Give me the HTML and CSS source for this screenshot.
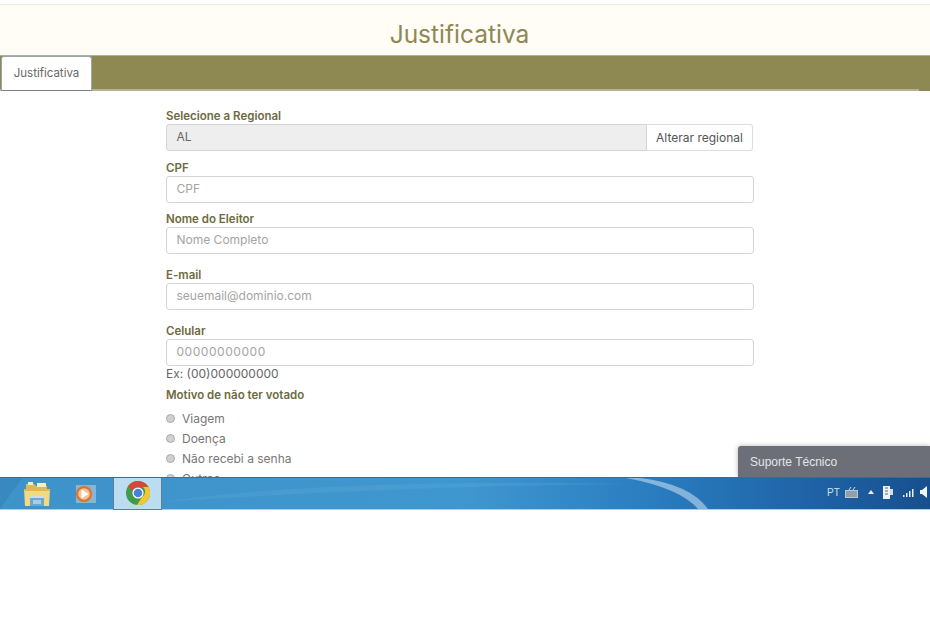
FILE: index.html
```html
<!DOCTYPE html>
<html lang="pt">
<head>
  <meta charset="UTF-8">
  <title>Justificativa</title>
  <link rel="stylesheet" href="styles.css">
</head>
<body>
  <div class="page">
    <header class="top">
      <h1>Justificativa</h1>
    </header>
    <nav class="tabs">
      <a class="tab">Justificativa</a>
    </nav>
    <form class="form">
      <label class="lbl lbl-first">Selecione a Regional</label>
      <div class="group">
        <div class="field readonly">AL</div>
        <button type="button" class="addon">Alterar regional</button>
      </div>

      <label class="lbl lbl-cpf">CPF</label>
      <div class="field">CPF</div>

      <label class="lbl lbl-nome">Nome do Eleitor</label>
      <div class="field">Nome Completo</div>

      <label class="lbl lbl-wide">E-mail</label>
      <div class="field">seuemail@dominio.com</div>

      <label class="lbl lbl-wide">Celular</label>
      <div class="field field-digits">00000000000</div>
      <div class="hint">Ex: (00)000000000</div>

      <label class="lbl lbl-motivo">Motivo de não ter votado</label>
      <div class="radios">
        <div class="radio"><span class="dot"></span>Viagem</div>
        <div class="radio"><span class="dot"></span>Doença</div>
        <div class="radio"><span class="dot"></span>Não recebi a senha</div>
        <div class="radio"><span class="dot"></span>Outros</div>
      </div>
    </form>
    <div class="support">Suporte Técnico</div>
  </div>

  <footer class="taskbar">
    <svg class="streak" width="930" height="31" viewBox="0 0 930 31">
      <path d="M0 31L22 0H0z" fill="#2f7fb6" opacity="0.5"/>
      <path d="M160 24Q330 0 640 6Q400 8 160 24z" fill="#7fc0e6" opacity="0.15"/>
      <path d="M640 0Q690 6 708 31H698Q680 10 626 0z" fill="#cfe3f2" opacity="0.55"/>
    </svg>
    <div class="tb-app tb-folder">
      <svg width="28" height="26" viewBox="0 0 28 26">
        <path d="M3 3h8l2 2h11v8H3z" fill="#d9b95c"/>
        <path d="M5 1h5v3H5zM14 2h9v4h-9z" fill="#f7eebf"/>
        <path d="M1 8h26l-1 17H2z" fill="#f3d983"/>
        <path d="M1 8h26v2H1z" fill="#e2b94d"/>
        <rect x="7" y="15" width="14" height="10" fill="#6fa8cf"/>
        <rect x="7" y="15" width="14" height="2" fill="#c7e0ef"/>
        <rect x="10" y="19" width="8" height="4" fill="#a9cde3"/>
      </svg>
    </div>
    <div class="tb-app tb-media">
      <svg width="20" height="20" viewBox="0 0 20 20">
        <rect x="0" y="1" width="20" height="18" fill="#86b6d4"/>
        <circle cx="8" cy="10" r="8" fill="#dd7429"/>
        <circle cx="8" cy="10" r="5.800" fill="#f2c49c"/>
        <path d="M5.500 5.500l7 4.500-7 4.500z" fill="#fff"/>
      </svg>
    </div>
    <div class="tb-app tb-chrome">
      <svg width="24" height="24" viewBox="0 0 24 24">
        <circle cx="12" cy="12" r="12" fill="#3f9b4b"/>
        <path d="M12 0a12 12 0 0 1 10.400 6H12a6 6 0 0 0-5.600 3.800L2.300 5A12 12 0 0 1 12 0z" fill="#d8453a"/>
        <path d="M22.400 6A12 12 0 0 1 11 24l5.200-8.200A6 6 0 0 0 17 6z" fill="#f3c531"/>
        <circle cx="12" cy="12" r="5.600" fill="#fff"/>
        <circle cx="12" cy="12" r="4.300" fill="#4a80d8"/>
      </svg>
    </div>
    <div class="tray">
      <span class="lang">PT</span>
      <svg width="13" height="11" viewBox="0 0 13 11"><path d="M0 3h13v8H0z" fill="#b9c6d2"/><path d="M1 5h11M1 7h11M1 9h11" stroke="#65788a"/><path d="M4 3l2-3M8 3l2-3" stroke="#d7e0e8"/></svg>
      <svg class="tray-up" width="6" height="4" viewBox="0 0 6 4"><path d="M0 4l3-4 3 4z" fill="#e8eef4"/></svg>
      <svg class="tray-power" width="10" height="14" viewBox="0 0 10 14"><path d="M0 1h7v13H0z" fill="#eef2f5"/><path d="M2 3h3M2 6h3M2 9h3" stroke="#56697c"/><path d="M7 4h3v6H7z" fill="#d5dde4"/></svg>
      <svg class="tray-net" width="12" height="9" viewBox="0 0 12 9"><path d="M1 7h1.500v2H1zM4 5h1.500v4H4zM7 3h1.500v6H7zM10 1h1.500v8H10z" fill="#e8eef4"/></svg>
      <svg class="tray-vol" width="7" height="12" viewBox="0 0 7 12"><path d="M0 4h2l5-4v12L2 8H0z" fill="#f1f4f7"/></svg>
    </div>
  </footer>
</body>
</html>
```

FILE: styles.css
```css
body {
  margin: 0;
  width: 930px;
  height: 620px;
  overflow: hidden;
  background-color: #fff;
  font-family: Inter, "Noto Sans", sans-serif;
  color: #555;
}
.page {
  position: relative;
  height: 477px;
  overflow: hidden;
}
.top {
  margin-top: 4px;
  height: 52px;
  box-sizing: border-box;
  background-color: #fffdf6;
  border-top: 1px solid #eeeae0;
  border-bottom: 1px solid #9fb3b0;
}
.top h1 {
  margin: 0;
  padding-right: 11px;
  font-size: 24.5px;
  line-height: 58px;
  font-weight: 400;
  text-align: center;
  color: #8e8852;
}
.tabs {
  display: flex;
  height: 35px;
  box-sizing: border-box;
  background: linear-gradient(#8e8852 33px, #b5b195 33px) no-repeat 0 0 / 919px 100%, #8e8852;
}
.tab {
  box-sizing: border-box;
  width: 91px;
  height: 35px;
  margin-left: 1px;
  background-color: #fff;
  border: 1px solid #9aa5a7;
  border-bottom-color: #808080;
  border-radius: 3px 3px 0 0;
  font-size: 11.5px;
  line-height: 33px;
  text-align: center;
  color: #666;
}
.form {
  width: 588px;
  margin-left: 166px;
  font-size: 12px;
}
.lbl {
  display: block;
  font-size: 11.5px;
  font-weight: 600;
  line-height: 16px;
  color: #6e6a3f;
}
.lbl-first { margin-top: 17px; }
.lbl-cpf { margin-top: 9px; }
.lbl-nome { margin-top: 8px; }
.lbl-wide { margin-top: 13px; }
.lbl-motivo { margin-top: 5px; }
.field {
  box-sizing: border-box;
  height: 27px;
  padding-left: 9.5px;
  background-color: #fff;
  border: 1px solid #d4d4d4;
  border-radius: 3px;
  line-height: 24px;
  color: #a4a4a4;
}
.field-digits {
  letter-spacing: 0.55px;
}
.group {
  display: flex;
  width: 587px;
}
.group .field {
  flex: 1;
  border-radius: 3px 0 0 3px;
  background-color: #eee;
  color: #666;
}
.addon {
  box-sizing: border-box;
  width: 106px;
  height: 27px;
  padding: 0;
  background-color: #fff;
  border: 1px solid #ddd;
  border-left: 0;
  border-radius: 0 3px 3px 0;
  font-family: inherit;
  font-size: 12px;
  color: #555;
}
.hint {
  height: 17px;
  margin-top: -1px;
  line-height: 17px;
  font-size: 12px;
  color: #666;
}
.radios {
  margin-top: 5px;
}
.radio {
  display: flex;
  align-items: center;
  gap: 7px;
  height: 20px;
  color: #777;
}
.dot {
  box-sizing: border-box;
  width: 9px;
  height: 9px;
  border-radius: 50%;
  background-color: #d0d0d0;
  border: 1px solid #aaa;
}
.support {
  position: absolute;
  right: 0;
  bottom: 0;
  box-sizing: border-box;
  width: 192px;
  height: 31px;
  padding-left: 12px;
  background-color: #6c6e78;
  border-radius: 3px 0 0 0;
  box-shadow: 0 0 5px rgba(0, 0, 0, 0.3);
  font-family: "Liberation Sans", Arial, sans-serif;
  font-size: 12px;
  line-height: 32px;
  color: #e6e6e6;
}
.taskbar {
  position: relative;
  display: flex;
  align-items: center;
  box-sizing: border-box;
  height: 33px;
  border-top: 1px solid #3d6c8f;
  border-bottom: 1px solid #a8d0ea;
  background: linear-gradient(90deg, #3e93c9 0%, #3f97cf 50%, #2a7dc0 70%, #1f65a8 86%, #174f8e 100%);
}
.streak {
  position: absolute;
  left: 0;
  top: 0;
}
.tb-app {
  position: relative;
  display: flex;
  align-items: center;
  justify-content: center;
}
.tb-folder { width: 28px; margin-left: 23px; }
.tb-media { width: 20px; margin-left: 25px; }
.tb-chrome {
  box-sizing: border-box;
  width: 49px;
  height: 32px;
  margin-left: 17px;
  background-color: rgba(220, 238, 248, 0.8);
  border: 1px solid #5b7f99;
  border-top: 0;
}
.tray {
  position: relative;
  display: flex;
  align-items: center;
  margin-left: auto;
  height: 100%;
  padding-bottom: 3px;
  box-sizing: border-box;
  width: 103px;
}
.lang {
  margin-right: 5px;
  font-family: "Liberation Sans", Arial, sans-serif;
  font-size: 10px;
  color: #cfe0ee;
}
.tray-up { margin-left: 10px; }
.tray-power { margin-left: 9px; }
.tray-net { margin-left: 9px; }
.tray-vol { margin-left: 6px; flex: none; }
```
